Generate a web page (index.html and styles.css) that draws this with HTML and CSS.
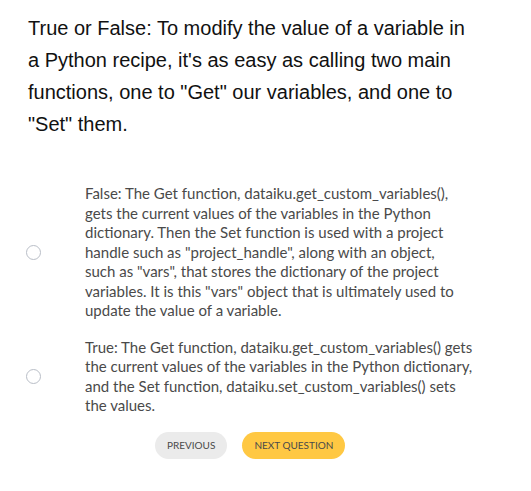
FILE: index.html
```html
<!DOCTYPE html>
<html>
<head>
<meta charset="utf-8">
<link rel="stylesheet" href="styles.css">
</head>
<body>
<div class="quiz">
  <p class="question">True or False: To modify the value of a variable in a Python recipe, it's as easy as calling two main functions, one to "Get" our variables, and one to "Set" them.</p>
  <div class="answers">
    <label class="answer">
      <span class="radio"></span>
      <span class="text">False: The Get function, dataiku.get_custom_variables(),<br>gets the current values of the variables in the Python<br>dictionary. Then the Set function is used with a project<br>handle such as "project_handle", along with an object,<br>such as "vars", that stores the dictionary of the project<br>variables. It is this "vars" object that is ultimately used to<br>update the value of a variable.</span>
    </label>
    <label class="answer">
      <span class="radio"></span>
      <span class="text">True: The Get function, dataiku.get_custom_variables() gets<br>the current values of the variables in the Python dictionary,<br>and the Set function, dataiku.set_custom_variables() sets<br>the values.</span>
    </label>
  </div>
  <div class="buttons">
    <button class="btn btn-prev">PREVIOUS</button>
    <button class="btn btn-next">NEXT QUESTION</button>
  </div>
</div>
</body>
</html>
```
FILE: styles.css
```css
html, body {
  margin: 0;
  padding: 0;
  background: #ffffff;
}
.quiz {
  padding: 12px 0 0 28px;
  width: 450px;
}
.question {
  margin: 0;
  font-family: "Liberation Sans", Arial, sans-serif;
  font-size: 20px;
  line-height: 32px;
  color: #111111;
}
.answers {
  margin-top: 44px;
  display: flex;
  flex-direction: column;
  gap: 17px;
}
.answer {
  display: flex;
  align-items: center;
}
.radio {
  flex: 0 0 auto;
  width: 13px;
  height: 13px;
  border: 1px solid #b9bec7;
  border-radius: 50%;
  margin-left: -2px;
  margin-right: 44px;
}
.text {
  width: 410px;
  white-space: nowrap;
  font-family: Lato, "Open Sans", sans-serif;
  font-size: 15px;
  line-height: 19.5px;
  color: #4a4a4a;
}
.buttons {
  margin-top: 16px;
  display: flex;
  gap: 15px;
  padding-left: 127px;
}
.btn {
  border: none;
  border-radius: 14px;
  height: 27px;
  padding: 0 12px;
  font-family: Lato, "Open Sans", sans-serif;
  font-size: 10px;
  color: #4a4a4a;
  cursor: pointer;
}
.btn-prev {
  background: #ebebeb;
}
.btn-next {
  background: #ffc843;
}
```
